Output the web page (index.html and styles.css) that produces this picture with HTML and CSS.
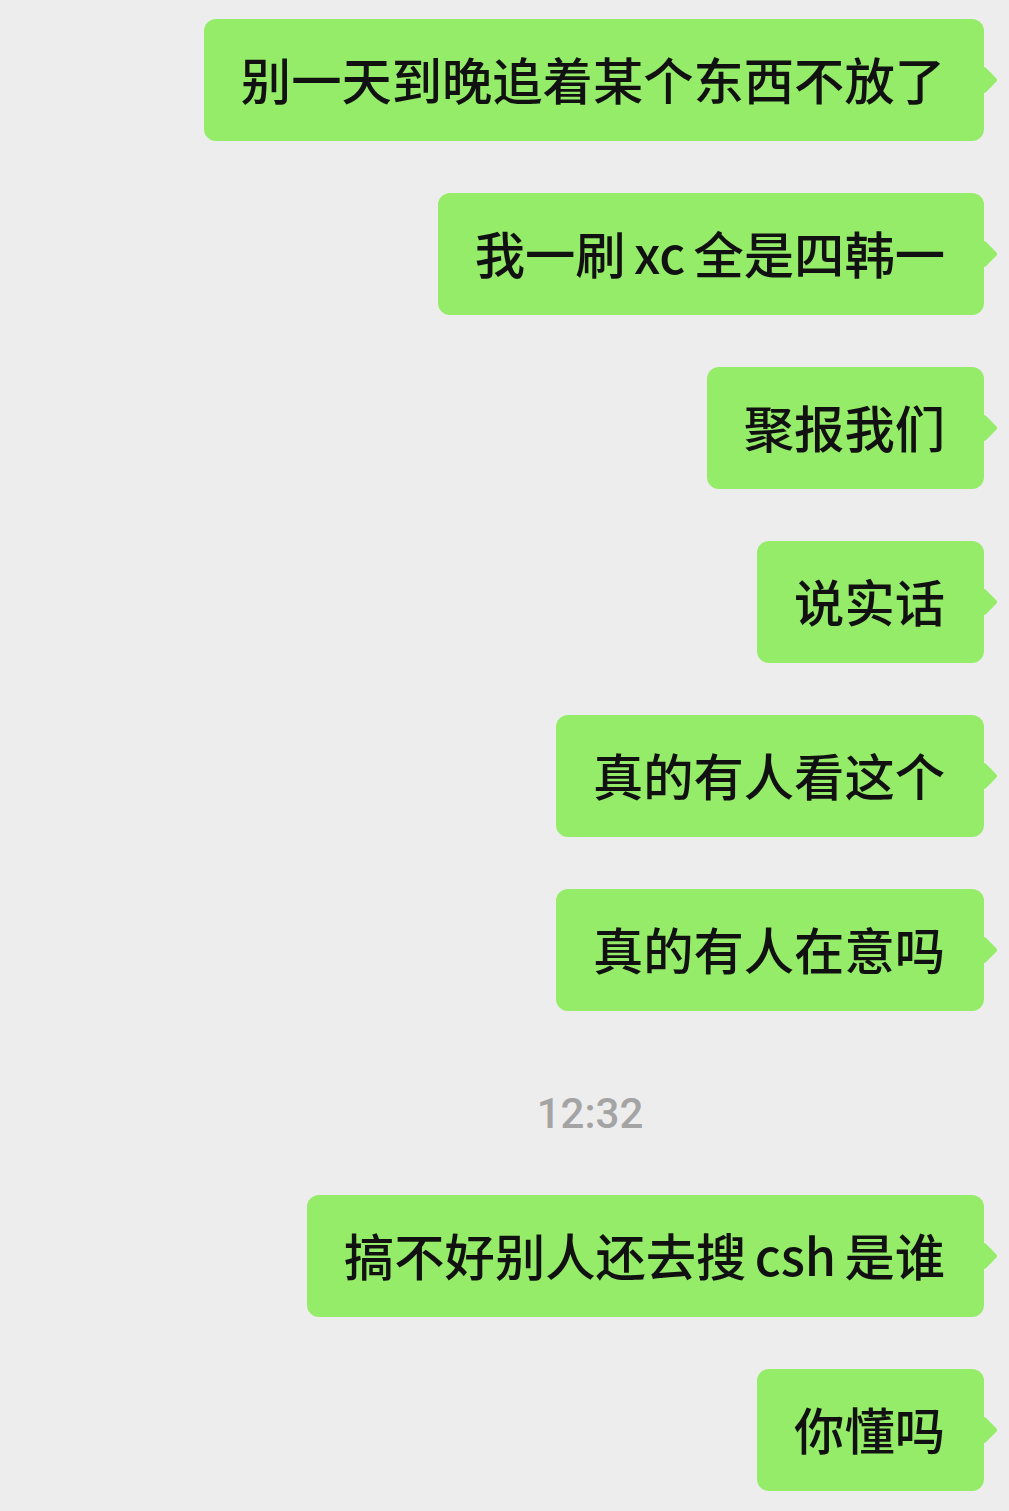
FILE: index.html
```html
<!DOCTYPE html>
<html lang="zh">
<head>
  <meta charset="UTF-8">
  <meta name="viewport" content="width=device-width, initial-scale=1.0">
  <title>聊天</title>
  <link rel="stylesheet" href="styles.css">
</head>
<body>
  <div class="chat">
    <div class="bubble">别一天到晚追着某个东西不放了</div>
    <div class="bubble">我一刷 xc 全是四韩一</div>
    <div class="bubble">聚报我们</div>
    <div class="bubble">说实话</div>
    <div class="bubble">真的有人看这个</div>
    <div class="bubble">真的有人在意吗</div>
    <div class="time">12:32</div>
    <div class="bubble">搞不好别人还去搜 csh 是谁</div>
    <div class="bubble">你懂吗</div>
  </div>
</body>
</html>
```

FILE: styles.css
```css
body {
  margin: 0;
  background-color: #ededed;
  font-family: "Noto Sans CJK SC", "Noto Sans", sans-serif;
}

.chat {
  display: flex;
  flex-direction: column;
  align-items: flex-end;
  gap: 52px;
  padding: 19px 25px 0 0;
}

.bubble {
  position: relative;
  background: #95ec69;
  color: #111;
  font-size: 50.3px;
  font-weight: 500;
  line-height: 50px;
  word-spacing: -3px;
  padding: 34px 39px 38px 37px;
  border-radius: 12px;
  white-space: nowrap;
}

.bubble::after {
  content: "";
  position: absolute;
  right: -10px;
  top: 51px;
  width: 20px;
  height: 20px;
  background: #95ec69;
  border-radius: 3px;
  transform: rotate(45deg);
}

.time {
  align-self: stretch;
  padding: 31px 0 9px 196px;
  text-align: center;
  font-family: Roboto, "Liberation Sans", sans-serif;
  font-size: 42px;
  font-weight: 500;
  line-height: 40px;
  color: #a4a4a4;
}
```
